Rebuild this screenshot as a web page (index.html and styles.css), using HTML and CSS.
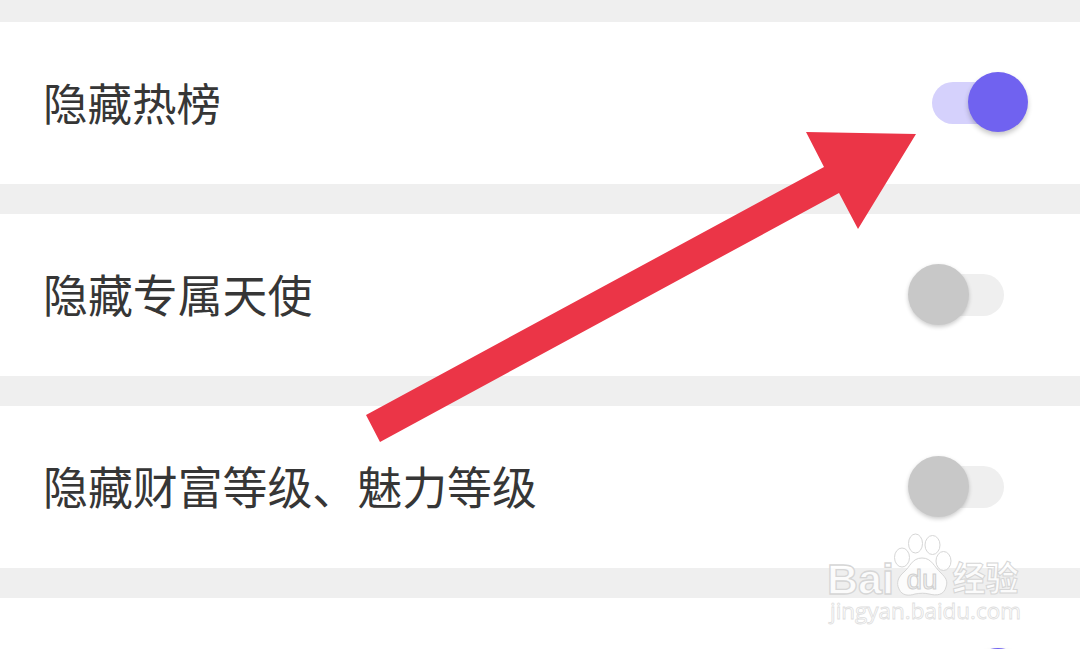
FILE: index.html
```
<!DOCTYPE html>
<html lang="zh-CN">

	<head>
		<meta charset="UTF-8">
		<title>隐私设置</title>
		<link rel="stylesheet" href="styles.css">
	</head>

	<body>
		<ul class="list">
			<li>
				<span class="name">隐藏热榜</span>
				<a href="javascript:;" class="switch on"><i></i></a>
			</li>
			<li>
				<span class="name">隐藏专属天使</span>
				<a href="javascript:;" class="switch"><i></i></a>
			</li>
			<li>
				<span class="name">隐藏财富等级、魅力等级</span>
				<a href="javascript:;" class="switch"><i></i></a>
			</li>
			<li>
				<span class="name"></span>
				<a href="javascript:;" class="switch on"><i></i></a>
			</li>
		</ul>
		<svg class="arrow" viewBox="0 0 552 312">
			<polygon points="1,285 459,37 441,2 551,4 493,99 474,63 15,312" />
		</svg>
		<svg class="mark" viewBox="0 0 210 100">
			<text x="7" y="63.500" class="bai" textLength="67" lengthAdjust="spacingAndGlyphs">Bai</text>
			<ellipse cx="82" cy="27.5" rx="7.5" ry="9.5" />
			<ellipse cx="95.5" cy="13.5" rx="7" ry="9.5" />
			<ellipse cx="112.5" cy="15" rx="7.5" ry="9.5" />
			<ellipse cx="123.5" cy="31" rx="7.5" ry="9.5" />
			<path d="M102 28C92 28 90 37 84 42C78 47 76 53 79 59C82 66 89 66 95 64C100 63 105 63 109 64C117 66 124 65 126 57C128 51 126 48 121 43C114 37 112 28 102 28z" />
			<text x="102" y="59" class="du" textLength="31" lengthAdjust="spacingAndGlyphs" text-anchor="middle">du</text>
			<text x="132.500" y="61" class="jy" textLength="66" lengthAdjust="spacingAndGlyphs">经验</text>
			<text x="10" y="89" class="url" textLength="191" lengthAdjust="spacingAndGlyphs">jingyan.baidu.com</text>
		</svg>
	</body>

</html>
```

FILE: styles.css
```
* {
	margin: 0;
	padding: 0;
}

html,
body {
	height: 100%;
	overflow: hidden;
}

body {
	position: relative;
	background: #efefef;
	font-family: "Noto Sans CJK SC", sans-serif;
}

li {
	list-style: none;
}

.list {
	height: 100%;
	padding-top: 21.5px;
	box-sizing: border-box;
	overflow: hidden;
	display: flex;
	flex-direction: column;
	gap: 30px;
}

.list li {
	height: 162px;
	flex: none;
	padding: 0 52px 0 43px;
	box-sizing: border-box;
	background: #fff;
	display: flex;
	align-items: center;
	justify-content: space-between;
}

.name {
	font-size: 44.9px;
	font-weight: 400;
	line-height: 66px;
	color: #363636;
	margin-top: -2px;
}

.list li:first-child .name {
	font-size: 44.5px;
}

.switch {
	width: 90px;
	height: 42px;
	margin-right: 24px;
	border-radius: 21px;
	background: #efefef;
	position: relative;
}

.switch i {
	width: 61px;
	height: 61px;
	border-radius: 50%;
	background: #c8c8c8;
	box-shadow: 0 2px 4px rgba(0, 0, 0, 0.2);
	position: absolute;
	left: -6px;
	top: -10px;
}

.switch.on {
	margin-right: 6px;
	background: #d5d1fc;
}

.switch.on i {
	width: 60px;
	height: 60px;
	left: auto;
	right: -5.5px;
	top: -10px;
	background: #7062f0;
	box-shadow: 0 3px 5px rgba(0, 0, 0, 0.22);
}

.arrow {
	width: 552px;
	height: 312px;
	position: absolute;
	left: 365px;
	top: 130px;
	fill: #eb3547;
}

.mark {
	width: 210px;
	height: 100px;
	position: absolute;
	left: 820px;
	top: 530px;
	fill: #fff;
	fill-opacity: 0.8;
	stroke: #d6d6d6;
	stroke-width: 1;
	font-family: "Liberation Sans", "Noto Sans CJK SC", sans-serif;
}

.bai {
	font-size: 43px;
	font-weight: bold;
	stroke-width: 1.3;
}

.du {
	font-size: 27px;
	fill: #eee;
	stroke: #cfcfcf;
}

.jy {
	font-size: 34px;
	font-weight: bold;
}

.url {
	font-family: "Open Sans", sans-serif;
	font-size: 22px;
	stroke: #dedede;
	stroke-width: 0.8;
}
```
